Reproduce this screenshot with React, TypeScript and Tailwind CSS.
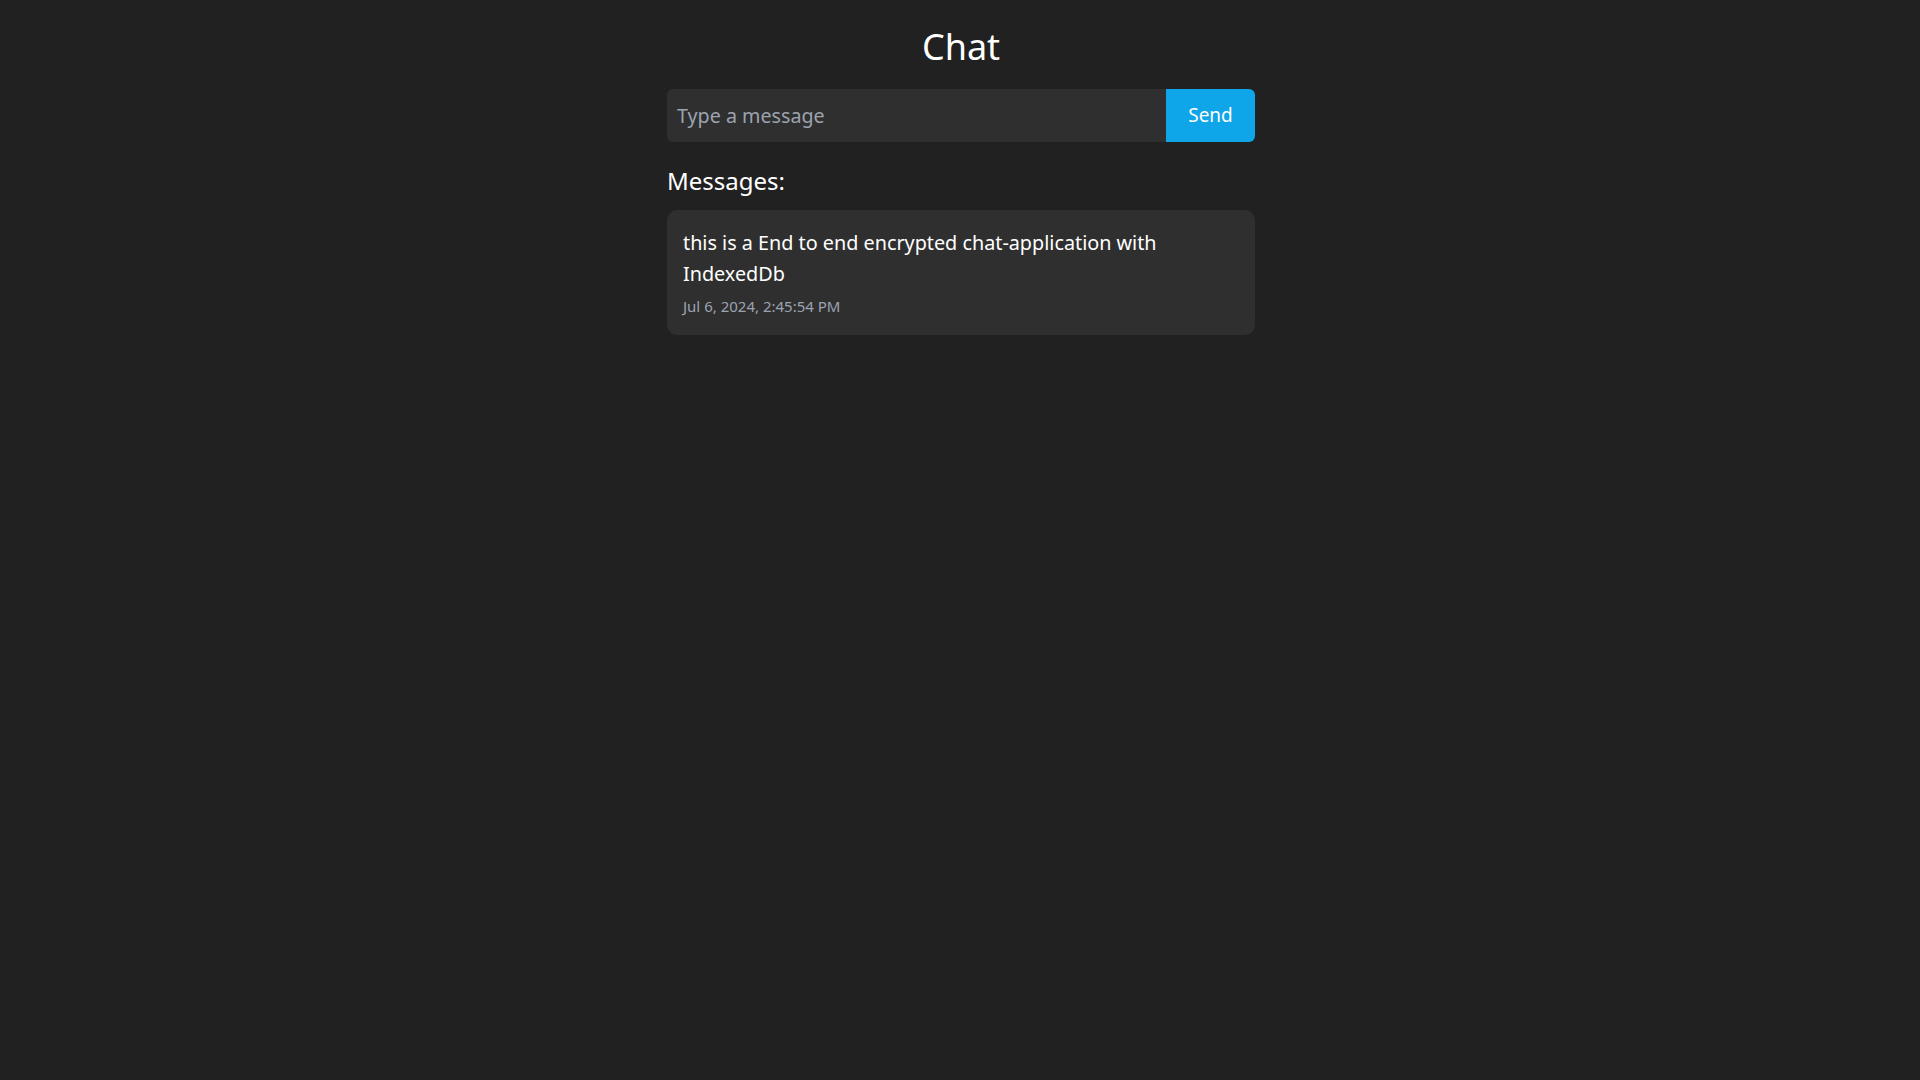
import { useState } from "react"

type Message = {
   text: string
   time: string
}

const initialMessages: Message[] = [
   {
      text: "this is a End to end encrypted chat-application with IndexedDb",
      time: "Jul 6, 2024, 2:45:54 PM",
   },
]

export default function App() {
   const [messages] = useState<Message[]>(initialMessages)
   const [text, setText] = useState("")

   return (
      <div className="min-h-screen bg-[#212121] text-white font-['Noto_Sans',sans-serif]">
         <div className="w-[588px] mx-auto pt-[23px] translate-x-[1px]">
            <h1 className="text-center text-[36px] leading-[48px]">Chat</h1>

            <form className="flex mt-[18px] h-[53px]" onSubmit={(e) => e.preventDefault()}>
               <input
                  value={text}
                  onChange={(e) => setText(e.target.value)}
                  placeholder="Type a message"
                  className="flex-1 bg-[#2f2f2f] rounded-l-md px-[10px] text-[19.7px] text-white placeholder:text-[#9ca3af] outline-none"
               />
               <button type="submit" className="w-[89px] bg-[#0ea5e9] rounded-r-md text-[19px] text-white">
                  Send
               </button>
            </form>

            <h2 className="mt-[23px] text-[24px] leading-[32px]">Messages:</h2>

            <div className="mt-[13px] flex flex-col gap-3">
               {messages.map((m, i) => (
                  <div key={i} className="bg-[#2f2f2f] rounded-[10px] px-4 pt-[17px] pb-[19px]">
                     <p className="text-[19.8px] leading-[31px]">{m.text}</p>
                     <p className="mt-[7px] text-[15px] leading-[20px] text-[#9ca3af]">{m.time}</p>
                  </div>
               ))}
            </div>
         </div>
      </div>
   )
}
